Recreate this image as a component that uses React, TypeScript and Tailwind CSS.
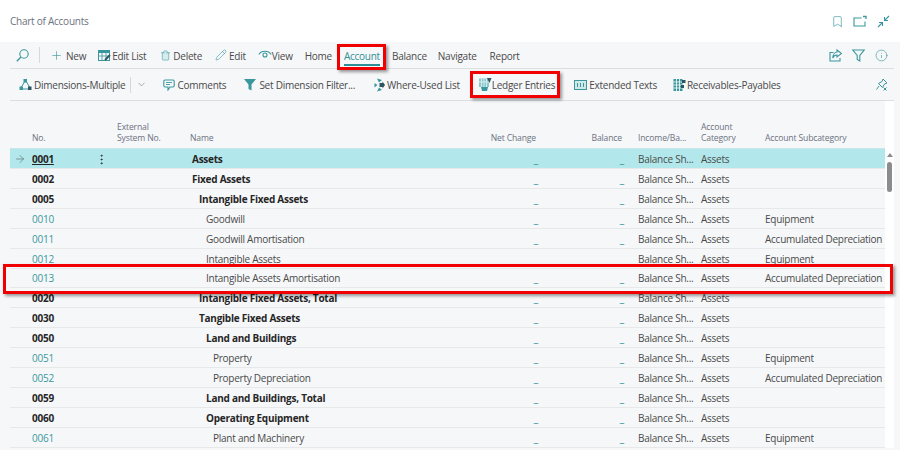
import React from "react";
import { Plus, Trash2, Pencil, ChevronDown, ArrowRight, EllipsisVertical, Bookmark, Info } from "lucide-react";

const T = "#3a979d";
const D = "#2b5560";

function Cmd({ icon, label, cls = "gap-[3px]" }: { icon?: React.ReactNode; label: string; cls?: string }) {
  return (
    <div className={`flex items-center whitespace-nowrap ${cls}`}>
      {icon}
      <span className="pt-[2px]">{label}</span>
    </div>
  );
}

const SearchIcon = () => (
  <svg width="13" height="13" viewBox="0 0 13 13" fill="none" stroke={T} strokeWidth="1.1"><circle cx="8" cy="5" r="4.2" /><path d="M5 8L0.8 12.2" strokeWidth="1.3" /></svg>
);
const DimIcon = () => (
  <svg width="13" height="14" viewBox="0 0 13 14"><path d="M6 3 L2.5 9 M7 3 L10.5 9 M3 11 H10" stroke={T} fill="none" strokeWidth="1" /><rect x="4.5" y="1" width="3.5" height="3.5" fill={T} /><rect x="0.5" y="8.5" width="3.5" height="3.5" fill={T} /><rect x="9" y="8.5" width="3.5" height="3.5" fill={D} /></svg>
);
const GridIcon = () => (
  <svg width="13" height="13" viewBox="0 0 13 13"><rect x="0.5" y="1.5" width="11" height="10" fill="none" stroke={T} /><rect x="0.5" y="1.5" width="11" height="2.5" fill={T} /><path d="M0.5 7h11M4 4v7.5M8 4v7.5" stroke={T} strokeWidth="0.8" /><path d="M7 11 L12 6" stroke={D} strokeWidth="1.8" /></svg>
);
const LedgerIcon = () => (
  <svg width="14" height="15" viewBox="0 0 14 15"><rect x="1" y="1.5" width="10" height="8.5" fill="#8cc8cc" /><path d="M3.5 2v8M6 2v8M8.5 2v8M1 5h10" stroke="#e4f3f4" strokeWidth="0.8" /><path d="M3 10h7l-1 4H4z" fill={T} /><path d="M9 1h4.5L11.5 6z" fill={D} /></svg>
);
const ExtIcon = () => (
  <svg width="13" height="10" viewBox="0 0 13 10"><rect x="0.5" y="0.5" width="12" height="9" fill="#cfe8ea" stroke={T} /><path d="M3.5 3v4M6.5 3v4M9.5 3v4" stroke={T} /></svg>
);
const RecIcon = () => (
  <svg width="13" height="14" viewBox="0 0 13 14"><rect x="0.5" y="1" width="9" height="12" fill={T} /><path d="M0.5 4h9M0.5 7h9M0.5 10h9M3.5 1v12M6.5 1v12" stroke="#fff" strokeWidth="0.8" /><rect x="9" y="2" width="3.5" height="3" fill={D} /><rect x="8" y="7" width="3" height="3" fill={D} /></svg>
);
const WhereIcon = () => (
  <svg width="11" height="14" viewBox="0 0 11 14"><path d="M3 0.5l5 1.5-3 2.5z M0.5 5l3 2-3 2.5z M3 13.5l5-1.5-3-2.5z" fill={T} /><path d="M5.5 5h3v-1.5l2.5 3.5-2.5 3.5V9h-3z" fill={D} /></svg>
);
const CommentIcon = () => (
  <svg width="12" height="12" viewBox="0 0 12 12" fill="none" stroke={T} strokeWidth="1.1"><path d="M2 1h8a1.2 1.2 0 0 1 1.2 1.2v4.6A1.2 1.2 0 0 1 10 8H7l-2 3V8H2A1.2 1.2 0 0 1 .8 6.8V2.2A1.2 1.2 0 0 1 2 1z" /><path d="M3 3.5h6M3 5.5h4" strokeWidth="0.9" /></svg>
);
const OpenIcon = () => (
  <svg width="15" height="13" viewBox="0 0 15 13" fill="none" stroke={T} strokeWidth="1.1"><path d="M8.5 3H1v8h11V6.5" /><path d="M10 1.5h3v2.5" strokeWidth="1.3" /></svg>
);
const CollapseIcon = () => (
  <svg width="13" height="13" viewBox="0 0 13 13" fill="none" stroke={T} strokeWidth="1.1"><path d="M12 1L7.5 5.5M7.5 2v3.5H11M1 12l4.5-4.5M2 7.5h3.5V11" /></svg>
);
const ShareIcon = () => (
  <svg width="13" height="13" viewBox="0 0 13 13" fill="none" stroke={T} strokeWidth="1.1"><path d="M4.5 3.5H1v8.5h10V9" /><path d="M8 1l4.5 3.5L8 8V6C6 6 4.5 7 3.8 9 3.8 6 5.5 3.3 8 3z" /></svg>
);
const FunnelIcon = () => (
  <svg width="13" height="13" viewBox="0 0 13 13" fill="none" stroke={T} strokeWidth="1.1"><path d="M0.8 1h11.4L7.8 6.5V12l-2.6-1.5V6.5z" /></svg>
);
const PinIcon = () => (
  <svg width="12" height="13" viewBox="0 0 12 13" fill="none" stroke={T} strokeWidth="1"><path d="M7 1l4 4-2.5 1-2 3.5-4-4L6 3.5z" /><path d="M3 8l-2.5 3.5M7.5 9.5l3 3M10.5 9.5l-3 3" /></svg>
);
const EyeIcon = () => (
  <svg width="14" height="12" viewBox="0 0 14 12" fill="none" stroke={T} strokeWidth="1.1"><path d="M0.8 5.5C3.5 1.2 10.5 1.2 13.2 5.5" /><circle cx="7" cy="6" r="2" /></svg>
);
const SolidFunnel = () => (
  <svg width="12" height="13" viewBox="0 0 12 13" fill={T}><path d="M0 1h12L7.5 6.5V12.5l-3-1.5V6.5z" /></svg>
);

type R = { no: string; name: string; bold?: boolean; ind: number; sub?: string; sel?: boolean };
const rows: R[] = [
  { no: "0001", name: "Assets", bold: true, ind: 0, sel: true },
  { no: "0002", name: "Fixed Assets", bold: true, ind: 0 },
  { no: "0005", name: "Intangible Fixed Assets", bold: true, ind: 1 },
  { no: "0010", name: "Goodwill", ind: 2, sub: "Equipment" },
  { no: "0011", name: "Goodwill Amortisation", ind: 2, sub: "Accumulated Depreciation" },
  { no: "0012", name: "Intangible Assets", ind: 2, sub: "Equipment" },
  { no: "0013", name: "Intangible Assets Amortisation", ind: 2, sub: "Accumulated Depreciation" },
  { no: "0020", name: "Intangible Fixed Assets, Total", bold: true, ind: 1 },
  { no: "0030", name: "Tangible Fixed Assets", bold: true, ind: 1 },
  { no: "0050", name: "Land and Buildings", bold: true, ind: 2 },
  { no: "0051", name: "Property", ind: 3, sub: "Equipment" },
  { no: "0052", name: "Property Depreciation", ind: 3, sub: "Accumulated Depreciation" },
  { no: "0059", name: "Land and Buildings, Total", bold: true, ind: 2 },
  { no: "0060", name: "Operating Equipment", bold: true, ind: 2 },
  { no: "0061", name: "Plant and Machinery", ind: 3, sub: "Equipment" },
];
const indents = ["pl-0", "pl-[7px]", "pl-[14px]", "pl-[21px]"];
const cols = "grid grid-cols-[22px_85px_75px_298px_48px_86px_14px_63px_64px_120px]";
const red = "border-[3px] border-[#f00000] shadow-[2px_2px_3px_rgba(0,0,0,0.4)]";

export default function App() {
  return (
    <div className="relative w-[900px] h-[450px] overflow-hidden bg-white text-[10px] tracking-[-0.25px] text-[#4a4a4a]" style={{ fontFamily: '"Open Sans", sans-serif' }}>
      <div className="h-[42px] flex items-center justify-between pl-[10px] pr-[10px]">
        <span className="text-[#6b7280] pt-[1px]">Chart of Accounts</span>
        <div className="flex items-center gap-[9px]">
          <Bookmark size={13} strokeWidth={1.2} color={T} />
          <OpenIcon />
          <CollapseIcon />
        </div>
      </div>
      <div className="h-[408px] bg-[#f6f7f9]">
        <div className="w-[884px] ml-[10px] flex flex-col">
          <div className="h-[27px] flex items-center border-b border-[#dcdfe2] pl-[6px] pr-[6px] justify-between">
            <div className="flex items-center">
              <SearchIcon />
              <div className="w-px h-[16px] bg-[#d5d8dc] mx-[10px]" />
              <Cmd icon={<Plus size={13} strokeWidth={1.2} color={T} />} label="New" cls="gap-[3px] mr-[12px]" />
              <Cmd icon={<GridIcon />} label="Edit List" cls="gap-[1px] mr-[14px]" />
              <Cmd icon={<Trash2 size={11} strokeWidth={1.2} color={T} fill="#d6ecee" />} label="Delete" cls="gap-[2px] mr-[13px]" />
              <Cmd icon={<Pencil size={12} strokeWidth={1.2} color={T} />} label="Edit" cls="gap-[2px] mr-[12px]" />
              <Cmd icon={<EyeIcon />} label="View" cls="gap-0 mr-[12px]" />
              <span className="mr-[12px] pt-[2px]">Home</span>
              <div className="relative mr-[12px] text-[#2f8f96] pt-[2px]">
                <span className="border-b-2 border-[#2f8f96] pb-[1px]">Account</span>
                <div className={`absolute left-[-7px] right-[-6px] top-[-3px] bottom-[-6px] ${red}`} />
              </div>
              <span className="mr-[11px] pt-[2px]">Balance</span>
              <span className="mr-[13px] pt-[2px]">Navigate</span>
              <span className="pt-[2px]">Report</span>
            </div>
            <div className="flex items-center gap-[10px]">
              <ShareIcon />
              <FunnelIcon />
              <Info size={13} strokeWidth={1.2} color={T} />
            </div>
          </div>
          <div className="h-[32px] flex items-center justify-between border-b border-[#dcdfe2] pl-[9px] pr-[6px]">
            <div className="flex items-center">
              <Cmd icon={<DimIcon />} label="Dimensions-Multiple" cls="gap-[2px]" />
              <div className="w-px h-[16px] bg-[#d5d8dc] mx-[5px]" />
              <ChevronDown size={11} strokeWidth={1} className="mr-[16px]" />
              <Cmd icon={<CommentIcon />} label="Comments" cls="gap-[2px] mr-[18px]" />
              <Cmd icon={<SolidFunnel />} label="Set Dimension Filter..." cls="gap-[3px] mr-[19px]" />
              <Cmd icon={<WhereIcon />} label="Where-Used List" cls="gap-[2px] mr-[18px]" />
              <div className="relative mr-[19px]">
                <Cmd icon={<LedgerIcon />} label="Ledger Entries" cls="gap-0" />
                <div className={`absolute left-[-8px] right-[-5px] top-[-5px] bottom-[-5px] ${red}`} />
              </div>
              <Cmd icon={<ExtIcon />} label="Extended Texts" cls="gap-[2px] mr-[16px]" />
              <Cmd icon={<RecIcon />} label="Receivables-Payables" cls="gap-[1px]" />
            </div>
            <PinIcon />
          </div>
          <div className="flex">
            <div className="w-[875px] shrink-0">
              <div className={`${cols} h-[48px] items-end pb-[4px] text-[8.6px] tracking-[-0.15px] leading-[11px] text-[#6b7280] border-b border-[#c9e6e8]`}>
                <span />
                <span>No.</span>
                <span>External<br />System No.</span>
                <span className="-ml-[2px]">Name</span>
                <span className="text-right -ml-[20px] pr-[2px] whitespace-nowrap">Net Change</span>
                <span className="text-right pr-[2px]">Balance</span>
                <span />
                <span className="whitespace-nowrap">Income/Ba...</span>
                <span>Account<br />Category</span>
                <span className="whitespace-nowrap">Account Subcategory</span>
              </div>
              {rows.map((r) => (
                <div key={r.no} className={`${cols} h-[19.93px] shrink-0 items-center pt-[2px] border-b border-[#e6e8ea] ${r.sel ? "bg-[#b2e8eb]" : ""}`}>
                  <span className="pl-[4px]">{r.sel && <ArrowRight size={12} strokeWidth={1} />}</span>
                  <span className={`relative ${r.bold ? "font-bold text-[#262626]" : "text-[#3a979d]"} ${r.sel ? "underline" : ""}`}>
                    {r.no}
                    {r.sel && <EllipsisVertical size={13} strokeWidth={1.5} className="absolute left-[63px] top-[1px]" />}
                  </span>
                  <span />
                  <span className={`${indents[r.ind]} ${r.bold ? "font-bold text-[#262626]" : ""} whitespace-nowrap`}>{r.name}</span>
                  <span className="text-right text-[#2f8f96]">_</span>
                  <span className="text-right text-[#2f8f96]">_</span>
                  <span />
                  <span className="whitespace-nowrap">Balance Sh...</span>
                  <span>Assets</span>
                  <span className="whitespace-nowrap">{r.sub}</span>
                </div>
              ))}
            </div>
            <div className="w-[9px] pt-[52px] flex flex-col items-center bg-white self-stretch">
              <div className="w-0 h-0 border-x-[3px] border-x-transparent border-b-[4px] border-b-[#8a8d90]" />
              <div className="mt-[5px] w-[5px] h-[30px] rounded bg-[#8a8d90]" />
            </div>
          </div>
        </div>
      </div>
      <div className={`absolute left-[3px] top-[264px] w-[890px] h-[30px] ${red}`} />
    </div>
  );
}
